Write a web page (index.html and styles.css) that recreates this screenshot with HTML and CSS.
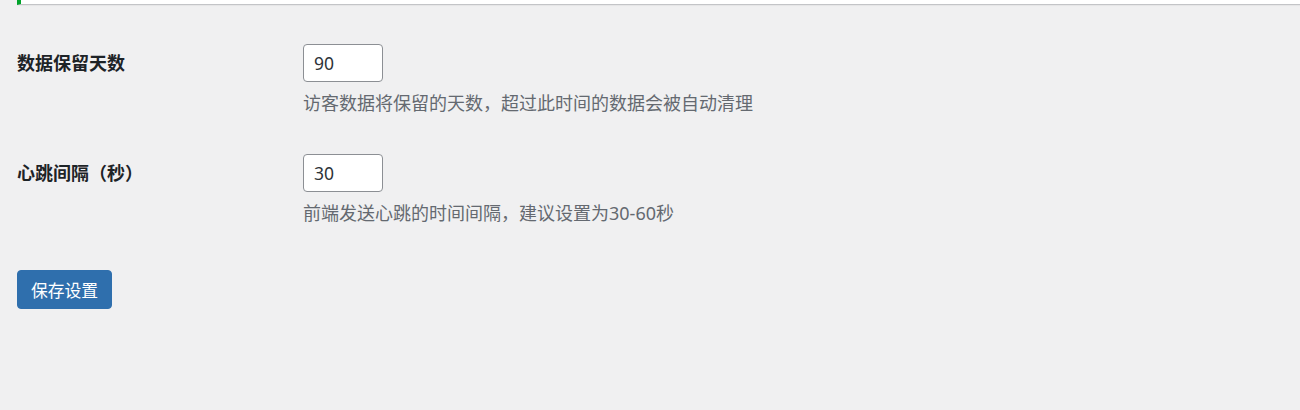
FILE: index.html
```html
<!DOCTYPE html>
<html lang="zh-CN">
<head>
  <meta charset="UTF-8" />
  <meta name="viewport" content="width=device-width, initial-scale=1.0" />
  <title>访客统计设置</title>
  <link rel="stylesheet" href="styles.css">
</head>
<body>

<div class="notice"></div>

<form class="settings">
  <div class="row">
    <label class="row-label" for="retention">数据保留天数</label>
    <div class="row-field">
      <input type="number" id="retention" class="small-text" value="90" />
      <p class="description">访客数据将保留的天数，超过此时间的数据会被自动清理</p>
    </div>
  </div>

  <div class="row">
    <label class="row-label" for="heartbeat">心跳间隔（秒）</label>
    <div class="row-field">
      <input type="number" id="heartbeat" class="small-text" value="30" />
      <p class="description">前端发送心跳的时间间隔，建议设置为30-60秒</p>
    </div>
  </div>

  <button type="button" class="button-primary">保存设置</button>
</form>

</body>
</html>
```

FILE: styles.css
```css
* {
  box-sizing: border-box;
}

html, body {
  margin: 0;
  padding: 0;
  width: 100%;
  height: 100%;
  background-color: #f0f0f1;
  color: #1d2327;
  font-family: "Noto Sans", "Noto Sans CJK SC", sans-serif;
}

.notice {
  margin-left: 17px;
  height: 5px;
  background: #fff;
  border-left: 4px solid #00a32a;
  border-bottom: 1px solid #c3c4c7;
  box-shadow: 0 1px 1px rgba(0, 0, 0, 0.04);
}

.settings {
  padding: 39px 0 0 17px;
}

.row {
  display: grid;
  grid-template-columns: 286px 1fr;
  margin-bottom: 38px;
}

.row-label {
  font-size: 18px;
  font-weight: bold;
  line-height: 38px;
}

.small-text {
  display: block;
  width: 80px;
  height: 38px;
  padding: 0 10px;
  font-family: inherit;
  font-size: 17.5px;
  color: #2c3338;
  background: #fff;
  border: 1px solid #8c8f94;
  border-radius: 4px;
  -moz-appearance: textfield;
}

.small-text::-webkit-inner-spin-button,
.small-text::-webkit-outer-spin-button {
  -webkit-appearance: none;
  margin: 0;
}

.description {
  margin: 8px 0 0;
  font-size: 18px;
  line-height: 26px;
  color: #646970;
}

.button-primary {
  display: block;
  margin-top: 44px;
  width: 95px;
  height: 39px;
  padding: 0;
  font-family: inherit;
  font-size: 16.8px;
  color: #fff;
  background: #2f6fad;
  border: 1px solid #2f6fad;
  border-radius: 4px;
  cursor: pointer;
}
```
